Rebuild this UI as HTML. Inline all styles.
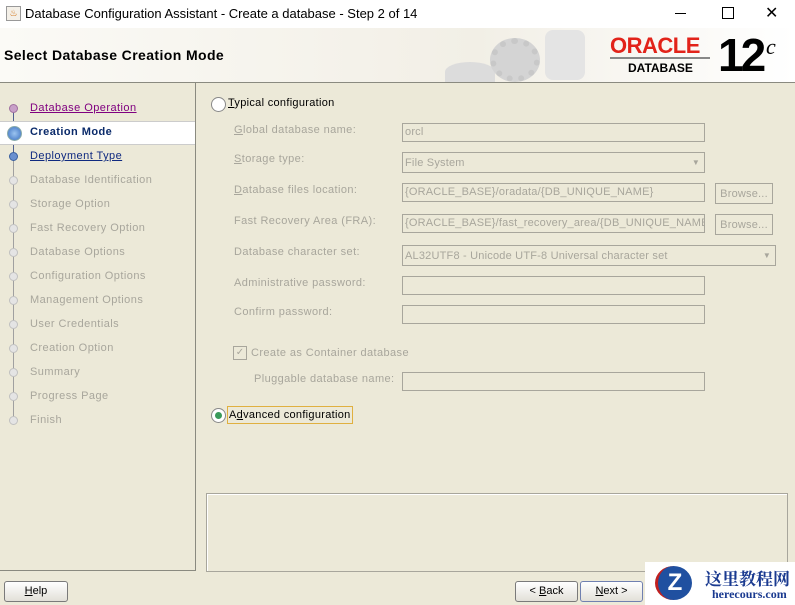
<!DOCTYPE html>
<html><head><style>
body{margin:0;width:795px;height:605px;overflow:hidden;background:#ece9d8;font-family:"Liberation Sans",sans-serif;position:relative}
.a{position:absolute}
.t{font-size:11px;color:#a8a69c;letter-spacing:0.4px}
.f{position:absolute;border:1px solid #a8a69c;background:#ece9d8;height:17px;font-size:11px;color:#a8a69c;line-height:17px;padding-left:2px;box-sizing:border-box;overflow:hidden;white-space:nowrap;letter-spacing:0.2px}
.nav{position:absolute;left:30px;font-size:11px;color:#a8a69c;letter-spacing:0.45px}
.dot{position:absolute;left:9px;width:9px;height:9px;border-radius:50%;background:#e4e4e4;border:1px solid #c0c0c0;box-sizing:border-box}
.btn{position:absolute;height:21px;border:1px solid #7a7a7a;border-radius:3px;background:linear-gradient(#fff,#e2e0d8);font-size:11px;text-align:center;line-height:19px;box-sizing:border-box}
</style></head><body>
<div class="a" style="left:0;top:0;width:795px;height:28px;background:#fff"></div>
<div class="a" style="left:6px;top:6px;width:13px;height:13px;border:1px solid #999;background:#f4f0e8;font-size:9px;color:#c60;text-align:center;line-height:13px">&#9832;</div>
<div class="a" style="left:25px;top:6px;font-size:13px;color:#000">Database Configuration Assistant - Create a database - Step 2 of 14</div>
<div class="a" style="left:675px;top:13px;width:11px;height:1px;background:#000"></div>
<div class="a" style="left:722px;top:7px;width:10px;height:10px;border:1px solid #000"></div>
<div class="a" style="left:765px;top:3px;font-size:16px">&#x2715;</div>
<div class="a" style="left:0;top:28px;width:795px;height:54px;background:linear-gradient(90deg,#fbfaf6,#f2efe6 60%,#fff);border-bottom:1px solid #8a8a80"></div>
<div class="a" style="left:4px;top:47px;font-size:14px;font-weight:bold;color:#000;letter-spacing:0.4px">Select Database Creation Mode</div>
<div class="a" style="left:445px;top:62px;width:50px;height:20px;border-radius:50% 50% 0 0;background:#dcdcdc"></div>
<div class="a" style="left:490px;top:38px;width:50px;height:44px;border-radius:50%;border:6px dotted #c8c8c8;box-sizing:border-box;background:#d4d4d4"></div>
<div class="a" style="left:545px;top:30px;width:40px;height:50px;border-radius:8px;background:#e4e4e4"></div>
<div class="a" style="left:610px;top:33px;font-size:22px;font-weight:bold;color:#e2231a;letter-spacing:-0.5px">ORACLE</div>
<div class="a" style="left:610px;top:57px;width:100px;height:2px;background:#888"></div>
<div class="a" style="left:628px;top:61px;font-size:12px;font-weight:bold">DATABASE</div>
<div class="a" style="left:718px;top:28px;font-size:46px;font-weight:bold;letter-spacing:-3px">12</div>
<div class="a" style="left:766px;top:34px;font-family:'Liberation Serif',serif;font-size:22px;font-style:italic">c</div>
<div class="a" style="left:0;top:83px;width:195px;height:487px;border-right:1px solid #8a8a80;border-bottom:1px solid #8a8a80"></div>
<div class="a" style="left:13px;top:108px;width:1px;height:312px;background:#a0a0a0"></div>
<div class="a" style="left:13px;top:108px;width:1px;height:50px;background:#506090"></div>
<div class="a" style="left:0;top:121px;width:195px;height:22px;background:#fff;border-top:1px solid #ccc;border-bottom:1px solid #ccc"></div>
<div class="dot" style="top:104px;background:#c8a0c8;border-color:#a070a0"></div>
<div class="nav" style="top:102px;color:#800080;text-decoration:underline">Database Operation</div>
<div class="a" style="left:7px;top:126px;width:13px;height:13px;border-radius:50%;background:radial-gradient(#9cc4f0,#3a70c0);border:1px solid #8aa"></div>
<div class="nav" style="top:126px;color:#0a2a6a;font-weight:bold">Creation Mode</div>
<div class="dot" style="top:152px;background:#6a90d0;border-color:#3a60a0"></div>
<div class="nav" style="top:150px;color:#102a80;text-decoration:underline">Deployment Type</div>
<div class="dot" style="top:176px"></div><div class="nav" style="top:174px">Database Identification</div>
<div class="dot" style="top:200px"></div><div class="nav" style="top:198px">Storage Option</div>
<div class="dot" style="top:224px"></div><div class="nav" style="top:222px">Fast Recovery Option</div>
<div class="dot" style="top:248px"></div><div class="nav" style="top:246px">Database Options</div>
<div class="dot" style="top:272px"></div><div class="nav" style="top:270px">Configuration Options</div>
<div class="dot" style="top:296px"></div><div class="nav" style="top:294px">Management Options</div>
<div class="dot" style="top:320px"></div><div class="nav" style="top:318px">User Credentials</div>
<div class="dot" style="top:344px"></div><div class="nav" style="top:342px">Creation Option</div>
<div class="dot" style="top:368px"></div><div class="nav" style="top:366px">Summary</div>
<div class="dot" style="top:392px"></div><div class="nav" style="top:390px">Progress Page</div>
<div class="dot" style="top:416px"></div><div class="nav" style="top:414px">Finish</div>

<div class="a" style="left:211px;top:97px;width:13px;height:13px;border-radius:50%;border:1px solid #888;background:#fff"></div>
<div class="a" style="left:228px;top:97px;font-size:11px;color:#000;letter-spacing:0.3px"><u>T</u>ypical configuration</div>
<div class="a t" style="left:234px;top:124px"><u>G</u>lobal database name:</div>
<div class="f" style="left:402px;top:123px;width:303px;height:19px">orcl</div>
<div class="a t" style="left:234px;top:153px"><u>S</u>torage type:</div>
<div class="f" style="left:402px;top:152px;width:303px;height:21px;line-height:20px">File System<span style="position:absolute;right:4px;font-size:8px">&#9660;</span></div>
<div class="a t" style="left:234px;top:184px"><u>D</u>atabase files location:</div>
<div class="f" style="left:402px;top:183px;width:303px;height:19px">{ORACLE_BASE}/oradata/{DB_UNIQUE_NAME}</div>
<div class="f" style="left:715px;top:183px;width:58px;height:21px;line-height:20px;text-align:center;padding:0">Browse...</div>
<div class="a t" style="left:234px;top:215px">Fast Recovery Area (FRA):</div>
<div class="f" style="left:402px;top:214px;width:303px;height:19px">{ORACLE_BASE}/fast_recovery_area/{DB_UNIQUE_NAME}</div>
<div class="f" style="left:715px;top:214px;width:58px;height:21px;line-height:20px;text-align:center;padding:0">Browse...</div>
<div class="a t" style="left:234px;top:246px">Database character set:</div>
<div class="f" style="left:402px;top:245px;width:374px;height:21px;line-height:20px">AL32UTF8 - Unicode UTF-8 Universal character set<span style="position:absolute;right:4px;font-size:8px">&#9660;</span></div>
<div class="a t" style="left:234px;top:277px">Administrative password:</div>
<div class="f" style="left:402px;top:276px;width:303px;height:19px"></div>
<div class="a t" style="left:234px;top:306px">Confirm password:</div>
<div class="f" style="left:402px;top:305px;width:303px;height:19px"></div>
<div class="a" style="left:233px;top:346px;width:12px;height:12px;border:1px solid #a8a69c;font-size:10px;color:#a8a69c;line-height:12px;text-align:center">&#10003;</div>
<div class="a t" style="left:251px;top:347px">Create as Container database</div>
<div class="a t" style="left:254px;top:373px">Pluggable database name:</div>
<div class="f" style="left:402px;top:372px;width:303px;height:19px"></div>
<div class="a" style="left:211px;top:408px;width:13px;height:13px;border-radius:50%;border:1px solid #888;background:#fff"><div style="margin:3px;width:7px;height:7px;border-radius:50%;background:#3a9a5a"></div></div>
<div class="a" style="left:227px;top:406px;height:16px;border:1px solid #e0b040;padding:0 1px;font-size:11px;line-height:16px;color:#000;letter-spacing:0.3px">A<u>d</u>vanced configuration</div>

<div class="a" style="left:206px;top:493px;width:580px;height:77px;border:1px solid #a8a69c;box-shadow:inset 1px 1px 0 #fff"></div>
<div class="btn" style="left:4px;top:581px;width:64px"><u>H</u>elp</div>
<div class="btn" style="left:515px;top:581px;width:63px">&lt; <u>B</u>ack</div>
<div class="btn" style="left:580px;top:581px;width:63px;border-color:#7080b0"><u>N</u>ext &gt;</div>
<div class="a" style="left:645px;top:562px;width:150px;height:43px;background:#fff"></div>
<div class="a" style="left:655px;top:566px;width:34px;height:34px;border-radius:50%;background:#2050a0;color:#fff;font-weight:bold;font-size:24px;text-align:center;line-height:34px;border-left:3px solid #c02020">Z</div>
<div class="a" style="left:705px;top:565px;font-family:'Noto Serif CJK SC',serif;font-size:17px;font-weight:bold;color:#1a3a90">这里教程网</div>
<div class="a" style="left:712px;top:587px;font-family:'Liberation Serif',serif;font-size:12px;font-weight:bold;color:#1a3a90">herecours.com</div>
</body></html>
